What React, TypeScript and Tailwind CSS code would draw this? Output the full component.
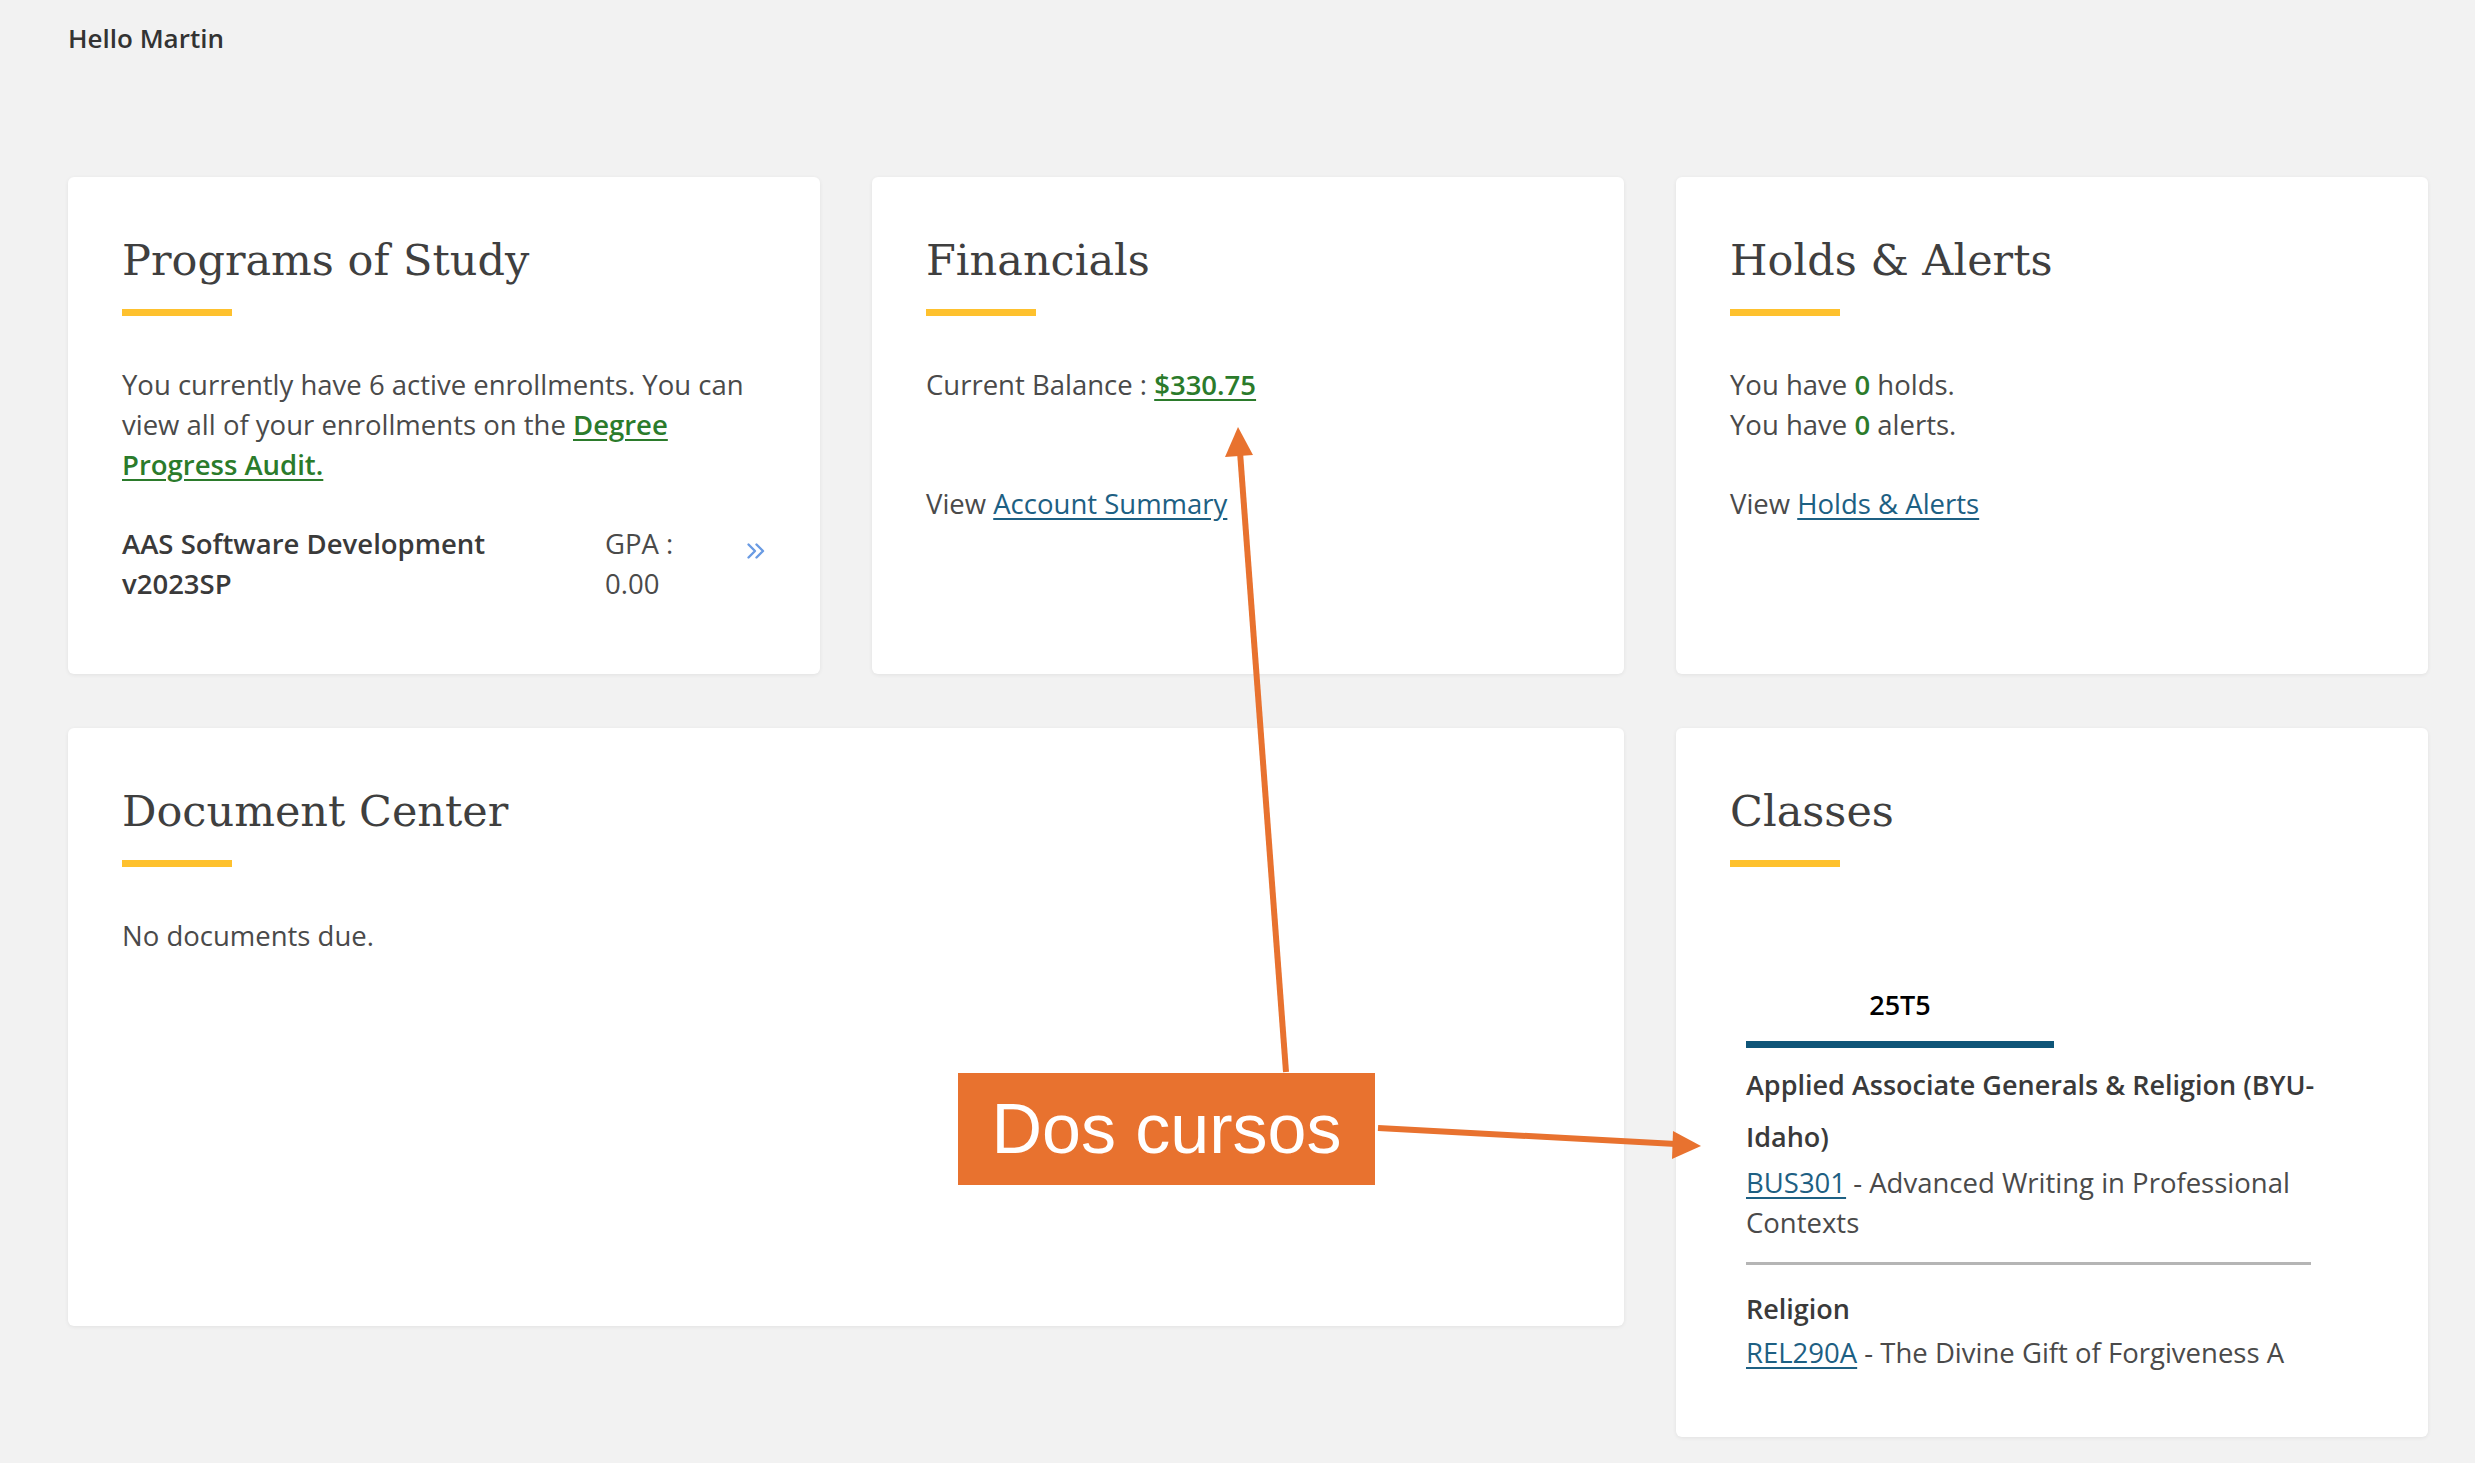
import type { ReactNode } from 'react';

const body = "font-['Open_Sans',sans-serif]";

function Card({ title, className = '', children }: { title: string; className?: string; children?: ReactNode }) {
  return (
    <section className={`rounded-md bg-white px-[54px] pt-[59px] shadow-[0_1px_4px_rgba(0,0,0,0.07)] ${className}`}>
      <h2 className="font-['DejaVu_Serif',serif] text-[43px] leading-[48px] font-normal text-[#3f3f3f]">{title}</h2>
      <div className="mt-[25px] h-[7px] w-[110px] bg-[#fec12e]" />
      <div className="mt-[49px] text-[27.5px] leading-[40px] text-[#4a4a4a]">{children}</div>
    </section>
  );
}

function GreenLink({ children }: { children: ReactNode }) {
  return <a className="font-semibold text-[#2b7b2b] underline underline-offset-4">{children}</a>;
}

function BlueLink({ children }: { children: ReactNode }) {
  return <a className="text-[#1d6083] underline underline-offset-4">{children}</a>;
}

function DoubleChevron() {
  return (
    <svg width="20" height="18" viewBox="0 0 20 18" fill="none" stroke="#6a9be3" strokeWidth="2.4" strokeLinecap="round" strokeLinejoin="round">
      <path d="M2.5 2.5 L9 9 L2.5 15.5" />
      <path d="M10.5 2.5 L17 9 L10.5 15.5" />
    </svg>
  );
}

export default function App() {
  return (
    <div className={`relative min-h-screen bg-[#f2f2f2] pt-[22px] pr-[47px] pb-[26px] pl-[68px] ${body}`}>
      <p className="text-[26px] leading-[32px] font-semibold text-[#333]">Hello Martin</p>

      <div className="mt-[123px] grid grid-cols-3 items-start gap-x-[52px] gap-y-[54px]">
        <Card title="Programs of Study" className="h-[497px]">
          <p>
            You currently have 6 active enrollments. You can view all of your enrollments on the{' '}
            <GreenLink>Degree Progress Audit.</GreenLink>
          </p>
          <div className="mt-[39px] flex">
            <div className="w-3/4 pr-[15px] font-semibold text-[#3a3a3a]">AAS Software Development v2023SP</div>
            <div className="w-1/6">GPA : 0.00</div>
            <div className="flex w-1/12 justify-end pt-[18px]">
              <DoubleChevron />
            </div>
          </div>
        </Card>

        <Card title="Financials" className="h-[497px]">
          <p>
            Current Balance : <GreenLink>$330.75</GreenLink>
          </p>
          <p className="mt-[79px]">
            View <BlueLink>Account Summary</BlueLink>
          </p>
        </Card>

        <Card title="Holds & Alerts" className="h-[497px]">
          <p>
            You have <span className="font-semibold text-[#2b7b2b]">0</span> holds.
          </p>
          <p>
            You have <span className="font-semibold text-[#2b7b2b]">0</span> alerts.
          </p>
          <p className="mt-[39px]">
            View <BlueLink>Holds &amp; Alerts</BlueLink>
          </p>
        </Card>

        <Card title="Document Center" className="col-span-2 h-[598px]">
          <p>No documents due.</p>
        </Card>

        <section className="h-[709px] rounded-md bg-white px-[54px] pt-[59px] shadow-[0_1px_4px_rgba(0,0,0,0.07)]">
          <h2 className="font-['DejaVu_Serif',serif] text-[43px] leading-[48px] font-normal text-[#3f3f3f]">Classes</h2>
          <div className="mt-[25px] h-[7px] w-[110px] bg-[#fec12e]" />
          <div className="mt-[122px] ml-4 text-[27.5px] leading-[40px] text-[#4a4a4a]">
            <div className="w-[308px] border-b-[7px] border-[#0f5578] pb-[20px] text-center text-[27px] leading-[32px] font-semibold text-black">
              25T5
            </div>
            <h3 className="mt-[11px] text-[27px] leading-[52px] font-semibold text-[#3a3a3a]">
              Applied Associate Generals &amp; Religion (BYU-Idaho)
            </h3>
            <p>
              <BlueLink>BUS301</BlueLink> - Advanced Writing in Professional Contexts
            </p>
            <div className="mt-[19px] h-[3px] w-[90%] bg-[#b5b5b5]" />
            <h3 className="mt-[20px] text-[27px] leading-[48px] font-semibold text-[#3a3a3a]">Religion</h3>
            <p>
              <BlueLink>REL290A</BlueLink> - The Divine Gift of Forgiveness A
            </p>
          </div>
        </section>
      </div>

      {/* annotation overlay */}
      <svg className="pointer-events-none absolute top-0 left-0" width="2475" height="1463">
        <line x1="1286" y1="1072" x2="1240" y2="452" stroke="#e8722f" strokeWidth="6" />
        <polygon points="1238,427 1225,457 1253,455" fill="#e8722f" />
        <line x1="1378" y1="1128" x2="1676" y2="1144" stroke="#e8722f" strokeWidth="6" />
        <polygon points="1701,1146 1673,1131 1672,1159" fill="#e8722f" />
      </svg>
      <div className="absolute top-[1073px] left-[958px] flex h-[112px] w-[417px] items-center justify-center bg-[#e8722f]">
        <span className="font-['Liberation_Sans',Arial,sans-serif] text-[70px] leading-none text-white">Dos cursos</span>
      </div>
    </div>
  );
}
